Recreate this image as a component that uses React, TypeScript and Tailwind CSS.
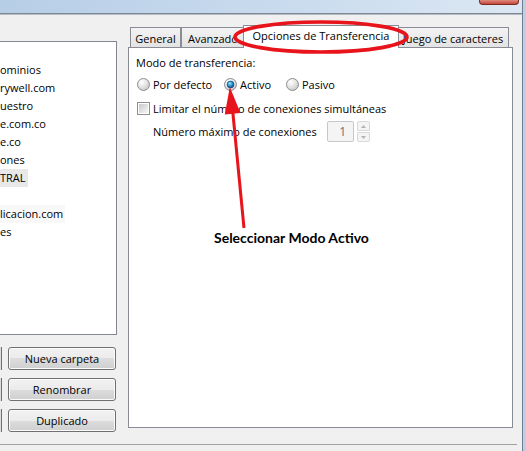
import React from "react";

type Row = { text: string; selected?: boolean; hot?: boolean };

const rows: Row[] = [
  { text: "ominios" },
  { text: "rywell.com" },
  { text: "uestro" },
  { text: "e.com.co" },
  { text: "e.co" },
  { text: "ones" },
  { text: "TRAL", selected: true },
  { text: "" },
  { text: "licacion.com", hot: true },
  { text: "es" },
];

function Radio({ id, checked }: { id: string; checked?: boolean }) {
  return (
    <svg width="13" height="13" viewBox="0 0 13 13" className="shrink-0">
      <defs>
        <radialGradient id={`${id}-bg`} cx="35%" cy="30%" r="75%">
          <stop offset="0" stopColor="#ffffff" />
          <stop offset="0.55" stopColor="#e4e4e4" />
          <stop offset="1" stopColor="#c4c4c4" />
        </radialGradient>
        <radialGradient id={`${id}-dot`} cx="40%" cy="35%" r="70%">
          <stop offset="0" stopColor="#a6ecff" />
          <stop offset="0.45" stopColor="#2f9fdc" />
          <stop offset="1" stopColor="#0c3767" />
        </radialGradient>
      </defs>
      <circle cx="6.5" cy="6.5" r="6" fill={`url(#${id}-bg)`} stroke="#8e8f8f" />
      {checked && (
        <circle cx="6.5" cy="6.5" r="3.4" fill={`url(#${id}-dot)`} stroke="#1b4a7a" strokeWidth="0.7" />
      )}
    </svg>
  );
}

function Checkbox() {
  return (
    <div className="w-[13px] h-[13px] shrink-0 border border-[#8e8f8f] bg-white p-px">
      <div className="w-full h-full bg-[linear-gradient(135deg,#c9c9c9,#f6f6f6)]" />
    </div>
  );
}

function WinButton({ label }: { label: string }) {
  return (
    <div className="w-[108px] h-[23px] flex items-center justify-center rounded-[3px] border border-[#707070] bg-[linear-gradient(#f2f2f2_0%,#ebebeb_50%,#dddddd_50%,#cfcfcf_100%)] shadow-[inset_0_0_0_1px_#fbfbfb]">
      {label}
    </div>
  );
}

function ButtonRow({ label }: { label: string }) {
  return (
    <div className="flex items-center gap-[6px]">
      <div className="w-[2px] h-[23px] border-r border-[#707070] bg-[#dddddd]" />
      <WinButton label={label} />
    </div>
  );
}

function Tab({ label, width }: { label: string; width: string }) {
  return (
    <div
      className={`${width} h-[20px] pt-[3px] text-center whitespace-nowrap overflow-hidden border-l border-t border-r border-[#898c95] bg-[linear-gradient(#f3f3f3,#e3e3e3)]`}
    >
      {label}
    </div>
  );
}

// red markup drawn over the dialog
function Annotations() {
  return (
    <div className="absolute inset-0 z-20 pointer-events-none">
      <svg className="absolute left-0 top-0" width="526" height="451" viewBox="0 0 526 451">
        <ellipse cx="321" cy="37" rx="86" ry="15" fill="none" stroke="#e8141b" strokeWidth="3.6" />
        <line x1="244" y1="228" x2="232.6" y2="110" stroke="#e8141b" strokeWidth="3" />
        <polygon points="229.8,87 240.5,113 224.8,114.6" fill="#e8141b" />
      </svg>
      <div className="absolute left-[214px] top-[229px] font-['Lato',sans-serif] font-bold text-[14px] leading-[18px] text-black whitespace-nowrap">
        Seleccionar Modo Activo
      </div>
    </div>
  );
}

export default function App() {
  return (
    <div className="relative flex w-[526px] h-[451px] overflow-hidden bg-[#f0f0f0] text-black font-['Open_Sans',sans-serif] text-[11px] leading-[15px]">
      <div className="flex flex-col w-[522px]">
        {/* title bar */}
        <div className="h-[13px] flex justify-end pr-[3px] bg-[linear-gradient(90deg,#b7cee7,#c9dbee_55%,#dce7f3)]">
          <div className="w-[40px] h-[5px] rounded-b-[4px] border border-t-0 border-[#7e2c22] bg-[linear-gradient(#e08a7e,#c4483a)]" />
        </div>
        <div className="h-px bg-[#7d8894]" />
        <div className="h-px bg-[#b4bcc5]" />

        <div className="flex items-start">
          {/* site tree + actions */}
          <div className="w-[117px] mt-[26px] shrink-0">
            <div className="h-[294px] bg-white border-t border-r border-b border-[#828790] pt-[19px] overflow-hidden">
              {rows.map((r, i) => (
                <div key={i} className="h-[18px] leading-[18px] whitespace-nowrap">
                  <span
                    className={`inline-block h-[18px] pr-[2px] ${
                      r.selected ? "bg-[#e8e8e8]" : r.hot ? "bg-[#f8f8f8]" : ""
                    }`}
                  >
                    {r.text}
                  </span>
                </div>
              ))}
            </div>
            <div className="mt-[12px] flex flex-col gap-[8px]">
              <ButtonRow label="Nueva carpeta" />
              <ButtonRow label="Renombrar" />
              <ButtonRow label="Duplicado" />
            </div>
          </div>

          {/* settings tabs */}
          <div className="ml-[11px] mt-[10px] w-[385px] shrink-0">
            <div className="relative z-10 h-[22px] flex items-end pl-[2px]">
              <Tab label="General" width="w-[51px]" />
              <Tab label="Avanzado" width="w-[64px]" />
              <div className="relative z-10 -mx-[2px] -mb-px w-[156px] h-[23px] pt-[2px] text-center whitespace-nowrap bg-white border-l border-t border-r border-[#898c95]">
                Opciones de Transferencia
              </div>
              <Tab label="Juego de caracteres" width="w-[112px]" />
            </div>
            <div className="h-[381px] bg-white border border-[#898c95] pl-[8px] pt-[7px]">
              <div className="h-[15px] -ml-px">Modo de transferencia:</div>
              <div className="mt-[7px] h-[15px] flex items-center">
                <div className="w-[87px] flex items-center gap-[3px]">
                  <Radio id="r-def" />
                  <span>Por defecto</span>
                </div>
                <div className="w-[62px] flex items-center gap-[3px]">
                  <Radio id="r-act" checked />
                  <span>Activo</span>
                </div>
                <div className="flex items-center gap-[3px]">
                  <Radio id="r-pas" />
                  <span>Pasivo</span>
                </div>
              </div>
              <div className="mt-[9px] h-[15px] flex items-center gap-[3px]">
                <Checkbox />
                <span>Limitar el número de conexiones simultáneas</span>
              </div>
              <div className="mt-[5px] h-[21px] flex items-center pl-[16px]">
                <span className="w-[174px] whitespace-nowrap">Número máximo de conexiones</span>
                <div className="w-[27px] h-[21px] rounded-[2px] border border-[#c5c8cb] bg-[#f4f4f4] text-[#6d6d6d] text-right pr-[7px] leading-[19px] text-[12px]">
                  1
                </div>
                <div className="ml-[3px] w-[13px] h-[21px] flex flex-col gap-px">
                  <div className="h-[10px] flex items-center justify-center border border-[#d9d9d9] bg-[#f4f4f4] rounded-t-[2px]">
                    <svg width="5" height="3" viewBox="0 0 5 3">
                      <polygon points="2.5,0 5,3 0,3" fill="#b2b2b2" />
                    </svg>
                  </div>
                  <div className="h-[10px] flex items-center justify-center border border-[#d9d9d9] bg-[#f4f4f4] rounded-b-[2px]">
                    <svg width="5" height="3" viewBox="0 0 5 3">
                      <polygon points="0,0 5,0 2.5,3" fill="#b2b2b2" />
                    </svg>
                  </div>
                </div>
              </div>
            </div>
          </div>
        </div>

        <div className="mt-[12px] w-[517px] h-px bg-[#a0a0a0]" />
      </div>
      {/* window frame */}
      <div className="w-[4px] border-l border-[#6e7d8f] bg-[#bccfe4]" />
      <Annotations />
    </div>
  );
}
